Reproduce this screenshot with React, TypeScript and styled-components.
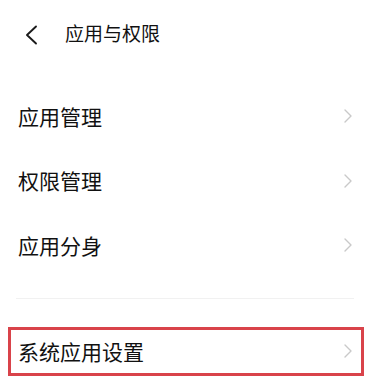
import React from "react";
import styled, { createGlobalStyle } from "styled-components";

const GlobalStyle = createGlobalStyle`
  html, body {
    margin: 0;
    padding: 0;
    background: #ffffff;
  }
  body {
    font-family: "Noto Sans CJK SC", "Noto Sans", sans-serif;
    color: #111111;
  }
`;

const items = ["应用管理", "权限管理", "应用分身"];

const Back = () => (
  <svg width="14" height="20" viewBox="0 0 14 20" fill="none">
    <path d="M12 1.5 L3 10 L12 18.5" stroke="#1a1a1a" strokeWidth="1.9" strokeLinecap="round" strokeLinejoin="round" />
  </svg>
);

const Chevron = () => (
  <svg width="10" height="16" viewBox="0 0 10 16" fill="none">
    <path d="M2 2 L8 8 L2 14" stroke="#c9c9c9" strokeWidth="1.4" strokeLinecap="round" strokeLinejoin="round" />
  </svg>
);

const App: React.FC = () => {
  return (
    <>
      <GlobalStyle />
      <Page>
        <Header>
          <BackButton>
            <Back />
          </BackButton>
          <Title>应用与权限</Title>
        </Header>
        <List>
          {items.map((item) => (
            <Row key={item}>
              <Label>{item}</Label>
              <Chevron />
            </Row>
          ))}
        </List>
        <Divider />
        <HighlightRow>
          <Label>系统应用设置</Label>
          <Chevron />
        </HighlightRow>
      </Page>
    </>
  );
};

const Page = styled.div`
  width: 372px;
  height: 388px;
  background: #ffffff;
  overflow: hidden;
`;

const Header = styled.div`
  height: 64px;
  display: flex;
  align-items: center;
  padding-left: 24px;
`;

const BackButton = styled.div`
  width: 14px;
  height: 20px;
  display: flex;
  margin-top: 6px;
`;

const Title = styled.div`
  margin-left: 27px;
  font-size: 19px;
  line-height: 1;
  color: #111111;
`;

const List = styled.div`
  padding-top: 20px;
  display: flex;
  flex-direction: column;
`;

const Row = styled.div`
  height: 64.5px;
  display: flex;
  align-items: center;
  justify-content: space-between;
  padding: 0 19px 0 18px;
`;

const Label = styled.span`
  font-size: 21px;
  line-height: 1;
  color: #111111;
`;

const Divider = styled.div`
  margin: 20px 18px 0 16px;
  height: 1px;
  background: #f1f1f1;
`;

const HighlightRow = styled.div`
  margin: 28px 8px 0 8px;
  height: 49px;
  box-sizing: border-box;
  border: 3px solid #d9434a;
  display: flex;
  align-items: center;
  justify-content: space-between;
  padding: 0 8px 0 7px;
`;

export default App;
